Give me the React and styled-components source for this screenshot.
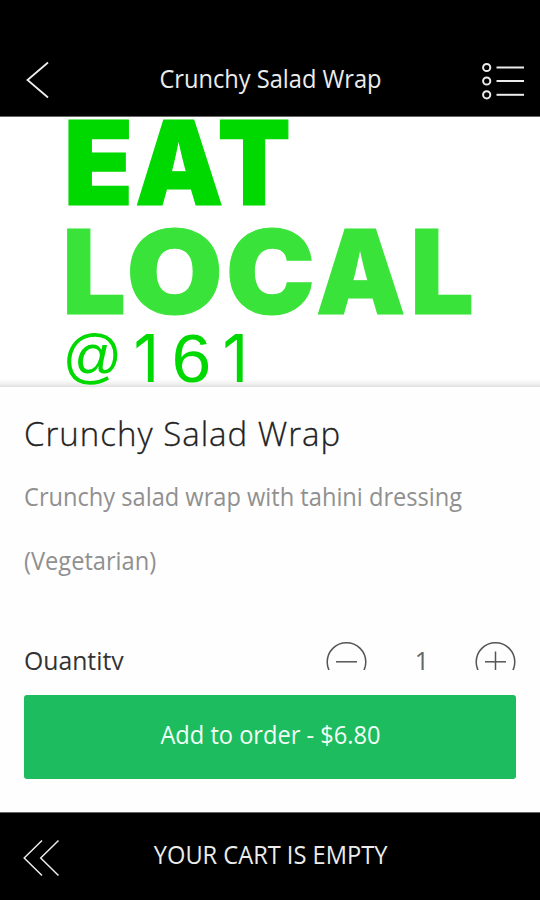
import React from "react";
import styled, { createGlobalStyle } from "styled-components";

const GlobalStyle = createGlobalStyle`
  body {
    margin: 0;
    background: #fff;
    font-family: "Open Sans", sans-serif;
  }
`;

const Screen = styled.div`
  width: 540px;
  height: 900px;
  display: flex;
  flex-direction: column;
  overflow: hidden;
  background: #fefefe;
`;

// Open Sans set slightly narrower than its natural width
const Condensed = styled.span`
  display: inline-block;
  transform: scaleX(${props => props.$scale || 0.945});
  transform-origin: ${props => props.$origin || "center"};
  white-space: pre-line;
`;

const Header = styled.header`
  box-sizing: border-box;
  height: 117px;
  padding: 44px 16px 0 26px;
  display: grid;
  grid-template-columns: 32px 1fr 42px;
  align-items: center;
  background: #000;
  color: #ececec;
  border-bottom: 1px solid #666;
`;

const IconButton = styled.button`
  display: flex;
  padding: 0;
  border: 0;
  background: none;
  color: inherit;
`;

const BarTitle = styled.div`
  padding: 0 0 ${props => props.$lift}px 1px;
  font-size: 25px;
  line-height: 34px;
  text-align: center;
  white-space: nowrap;
`;

const Banner = styled.div`
  height: 270px;
  flex: none;
  background: linear-gradient(#fff 262px, #ececec 268px, #dedede);
`;

const Logo = styled.svg`
  display: block;
`;

const LogoLetter = styled.text`
  font-family: ${props => props.$family || "Inter"}, sans-serif;
  font-size: ${props => props.$size}px;
  font-weight: ${props => props.$weight};
  fill: ${props => props.$fill};
  stroke: ${props => props.$fill};
  stroke-width: ${props => (props.$weight > 400 ? 1.2 : 0)}px;
`;

const Details = styled.main`
  height: 283px;
  flex: none;
  padding: 0 24px;
  overflow: hidden;
`;

const ItemName = styled.h1`
  margin: 24px 0 0;
  font-size: 33px;
  font-weight: 300;
  line-height: 46px;
  letter-spacing: 1px;
  color: #222;
  -webkit-text-stroke: 0.3px #222;
  white-space: nowrap;
`;

const Description = styled.p`
  margin: 7px 0 0;
  font-size: 25px;
  line-height: 64px;
  color: #909090;
`;

const QuantityRow = styled.div`
  margin-top: 31px;
  height: 80px;
  display: grid;
  grid-template-columns: 1fr 42px 107px 42px;
  align-items: start;
`;

const QuantityLabel = styled.div`
  font-size: 25px;
  font-weight: 500;
  line-height: 75px;
  color: #333;
`;

const QuantityValue = styled.div`
  padding-left: 3px;
  font-size: 25px;
  line-height: 75px;
  color: #666;
  text-align: center;
`;

const StepButton = styled(IconButton)`
  margin-top: 18px;
  color: #555;
`;

const Actions = styled.div`
  height: 142px;
  flex: none;
  box-sizing: border-box;
  padding: 25px 24px 0;
`;

const AddButton = styled.button`
  width: 492px;
  height: 84px;
  padding: 0 0 6px;
  border: 0;
  border-radius: 3px;
  background: #1dbc5e;
  color: #f1fff6;
  font: 400 25px "Open Sans", sans-serif;
`;

const CartBar = styled.footer`
  flex: 1;
  box-sizing: border-box;
  padding: 3px 23px 0;
  display: grid;
  grid-template-columns: 42px 1fr 42px;
  align-items: center;
  background: #000;
  color: #ececec;
  border-top: 1px solid #666;
`;

const DARK_GREEN = "#00d900";
const LIGHT_GREEN = "#3ae33a";

// stretch is the horizontal scale of the single letter
const EAT = [
  { char: "E", x: 63.8, stretch: 0.97 },
  { char: "A", x: 135, stretch: 0.955 },
  { char: "T", x: 217.5, stretch: 0.915 }
];

const LOCAL = [
  { char: "L", x: 62.5, stretch: 0.96 },
  { char: "O", x: 126.5, stretch: 1.065 },
  { char: "C", x: 226, stretch: 1.02 },
  { char: "A", x: 316, stretch: 0.965 },
  { char: "L", x: 410.5, stretch: 0.96 }
];

const AT_161 = [
  { char: "@", x: 62.5, y: 258.5, size: 59, family: "Liberation Sans" },
  { char: "1", x: 133.5, y: 264.7, size: 66.5, stretch: 0.95 },
  { char: "6", x: 171.5, y: 264.7, size: 68, stretch: 1.05, family: "Liberation Sans" },
  { char: "1", x: 222.5, y: 264.7, size: 66.5, stretch: 0.95 }
];

const LogoLine = ({ letters, y, fill, weight }) =>
  letters.map(letter => (
    <LogoLetter
      key={letter.x}
      $size={letter.size || 116.6}
      $weight={weight}
      $family={letter.family}
      $fill={fill}
      transform={`translate(${letter.x} ${letter.y || y}) scale(${letter.stretch || 1} 1)`}
    >
      {letter.char}
    </LogoLetter>
  ));

const BackIcon = () => (
  <svg width="24" height="38" fill="none" stroke="currentColor" strokeWidth="1.8">
    <path d="M22 1.5 1.5 19 22 36.5" />
  </svg>
);

const ListIcon = () => (
  <svg width="42" height="40" fill="none" stroke="currentColor" strokeWidth="2">
    {[7.5, 21, 34.8].map(y => (
      <g key={y}>
        <circle cx="4.7" cy={y} r="3.6" />
        <path d={`M14.5 ${y}h27.5`} />
      </g>
    ))}
  </svg>
);

const DoubleBackIcon = () => (
  <svg width="38" height="38" fill="none" stroke="currentColor" strokeWidth="1.5">
    <path d="M19 1.5 1.2 19 19 36.5M35.5 1.5 17.7 19 35.5 36.5" />
  </svg>
);

const StepIcon = ({ plus }) => (
  <svg width="42" height="42" fill="none" stroke="currentColor" strokeWidth="1.5">
    <circle cx="21.5" cy="21" r="19.3" />
    <path d="M11 20.8h21" />
    {plus && <path d="M21.5 10.5v21" />}
  </svg>
);

const App = () => (
  <>
    <GlobalStyle />
    <Screen>
      <Header>
        <IconButton aria-label="Back">
          <BackIcon />
        </IconButton>
        <BarTitle $lift={5}>
          <Condensed>Crunchy Salad Wrap</Condensed>
        </BarTitle>
        <IconButton aria-label="Menu">
          <ListIcon />
        </IconButton>
      </Header>
      <Banner>
        <Logo width="540" height="270">
          <LogoLine letters={EAT} y={87.8} fill={DARK_GREEN} weight={900} />
          <LogoLine letters={LOCAL} y={196.8} fill={LIGHT_GREEN} weight={900} />
          <LogoLine letters={AT_161} fill={DARK_GREEN} weight={400} />
        </Logo>
      </Banner>
      <Details>
        <ItemName>Crunchy Salad Wrap</ItemName>
        <Description>
          <Condensed $origin="left">
            {"Crunchy salad wrap with tahini dressing\n(Vegetarian)"}
          </Condensed>
        </Description>
        <QuantityRow>
          <QuantityLabel>
            <Condensed $origin="left" $scale={0.99}>
              Quantity
            </Condensed>
          </QuantityLabel>
          <StepButton aria-label="Remove one">
            <StepIcon />
          </StepButton>
          <QuantityValue>1</QuantityValue>
          <StepButton aria-label="Add one">
            <StepIcon plus />
          </StepButton>
        </QuantityRow>
      </Details>
      <Actions>
        <AddButton>
          <Condensed>Add to order - $6.80</Condensed>
        </AddButton>
      </Actions>
      <CartBar>
        <IconButton aria-label="Open cart">
          <DoubleBackIcon />
        </IconButton>
        <BarTitle $lift={9}>
          <Condensed>YOUR CART IS EMPTY</Condensed>
        </BarTitle>
      </CartBar>
    </Screen>
  </>
);

export default App;
